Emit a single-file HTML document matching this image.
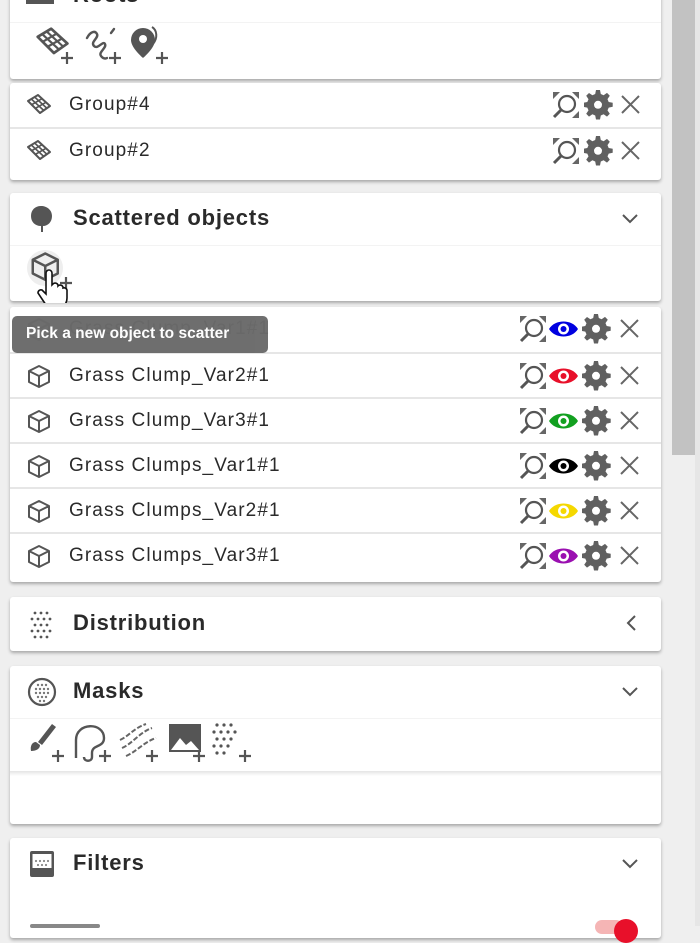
<!DOCTYPE html>
<html><head><meta charset="utf-8">
<style>
*{box-sizing:border-box;margin:0;padding:0}
body{width:700px;height:926px;overflow:hidden;background:#efefef;font-family:"Liberation Sans",sans-serif;color:#222;position:relative}
.card{position:absolute;left:10px;width:651px;background:#fff;border-radius:3px;box-shadow:0 2px 3px rgba(0,0,0,.3)}
.hdr{position:absolute;left:0;right:0;height:52px;font-size:22px;font-weight:bold;color:#2a2a2a;letter-spacing:.8px}
.hdr .t{position:absolute;left:63px;top:12px}
.chev{position:absolute;right:22px;top:20px}
.row{position:absolute;left:0;right:0;height:45px;border-top:2px solid #e6e6e6;font-size:19px;color:#2a2a2a;letter-spacing:1.1px}
.row .n{position:absolute;left:59px;top:11px}
.row .ic{position:absolute;left:16px;top:10px}
.acts{position:absolute;right:20px;top:7px;display:flex;align-items:center}
.sb{position:absolute;left:672px;top:0;width:23px;height:455px;background:#c2c2c2}
.tip{position:absolute;left:12px;top:316px;width:256px;height:37px;background:#6a6a6a;border-radius:5px;color:#fff;font-weight:bold;font-size:15.5px;padding:9px 0 0 14px;opacity:.97}
</style></head><body>
<svg width="0" height="0" style="position:absolute">
<defs>
<g id="zoom"><path d="M1 1h7L1 8z M27 1h-7l7 7z M27 27h-7l7-7z" fill="#666"/><circle cx="15" cy="13" r="8" stroke="#555" stroke-width="2.2" fill="none"/><path d="M9 19l-7 7" stroke="#555" stroke-width="3"/></g>
<g id="gear"><path fill="#606060" d="M12 0h4l.8 4 2.8 1.2 3.4-2.3 2.8 2.8-2.3 3.4L24.7 12l4 .8v4l-4 .8-1.2 2.8 2.3 3.4-2.8 2.8-3.4-2.3-2.8 1.2-.8 4h-4l-.8-4-2.8-1.2-3.4 2.3-2.8-2.8 2.3-3.4L3.3 17.6l-4-.8v-4l4-.8 1.2-2.8-2.3-3.4 2.8-2.8 3.4 2.3L11.2 4z"/><circle cx="14" cy="14.8" r="4" fill="#fff"/></g>
<g id="x"><path d="M2 2l17 17M19 2L2 19" stroke="#666" stroke-width="2"/></g>
<g id="cube"><path d="M13 2l10 5v11l-10 5-10-5V7zM3 7l10 5 10-5M13 12v11" stroke="#555" stroke-width="2" fill="none" stroke-linejoin="round"/></g>
<g id="grid"><path d="M2 8L12 2 24 13 14 20z" stroke="#555" stroke-width="2" fill="none" stroke-linejoin="round"/><path d="M5.3 6L17.3 17M8.6 4L20.6 15M6 11.5L16 5.7M10 15L20 9.3" stroke="#555" stroke-width="1.6"/></g>
<path id="chd" d="M2 2l7 7 7-7" stroke="#555" stroke-width="2" fill="none"/>
<g id="plus"><path d="M6 0v12M0 6h12" stroke="#555" stroke-width="2.2"/></g>
</defs></svg>

<!-- card 1 top -->
<div class="card" style="top:-20px;height:99px">
 <svg style="position:absolute;left:16px;top:17px" width="30" height="8"><rect x="0" y="0" width="28" height="7" fill="#555"/></svg>
 <div style="position:absolute;left:63px;top:2px;font-size:22px;font-weight:bold;letter-spacing:.8px;color:#2a2a2a">Roots</div>
 <div style="position:absolute;left:0;right:0;top:42px;border-top:1px solid #f3f3f3"></div>
 <svg style="position:absolute;left:0;top:20px" width="180" height="80">
  <g transform="translate(25,26) scale(1.35)"><use href="#grid"/></g>
  <use href="#plus" x="51" y="52"/>
  <path d="M77 38c3-6 8-8 10-4s-7 8-3 12 9-6 11-2-7 8-4 12 6 2 6 2M101 33l3-4" stroke="#555" stroke-width="2.4" fill="none" stroke-linecap="round"/>
  <use href="#plus" x="99" y="52"/>
  <path d="M133 28a12 12 0 0 1 12 12c0 8-12 18-12 18s-12-10-12-18a12 12 0 0 1 12-12z" fill="#555"/><circle cx="133" cy="39" r="4" fill="#fff"/><path d="M142 27c5 3 6 11 1 17" stroke="#555" stroke-width="2" fill="none"/>
  <use href="#plus" x="146" y="52"/>
 </svg>
</div>

<!-- card groups -->
<div class="card" style="top:83px;height:97px">
 <div class="row" style="top:0;border-top:none"><svg class="ic" width="28" height="24"><use href="#grid"/></svg><div class="n">Group#4</div>
  <div class="acts" style="right:19px"><svg width="28" height="28"><use href="#zoom"/></svg><svg width="30" height="30" style="margin-left:4px"><use href="#gear"/></svg><svg width="22" height="22" style="margin-left:6px"><use href="#x"/></svg></div></div>
 <div class="row" style="top:44px"><svg class="ic" width="28" height="24"><use href="#grid"/></svg><div class="n">Group#2</div>
  <div class="acts" style="right:19px"><svg width="28" height="28"><use href="#zoom"/></svg><svg width="30" height="30" style="margin-left:4px"><use href="#gear"/></svg><svg width="22" height="22" style="margin-left:6px"><use href="#x"/></svg></div></div>
</div>

<!-- scattered header -->
<div class="card" style="top:193px;height:108px">
 <div class="hdr" style="top:0"><svg style="position:absolute;left:20px;top:12px" width="26" height="28"><path d="M11 1c6 0 11 4 11 10s-4 10-9 10v6h-2v-6C5 21 1 17 1 11S5 1 11 1z" fill="#555"/></svg><div class="t">Scattered objects</div><svg class="chev" width="18" height="12"><use href="#chd"/></svg></div>
 <div style="position:absolute;left:0;right:0;top:52px;border-top:1px solid #f3f3f3"></div>
 <svg style="position:absolute;left:14px;top:54px" width="60" height="56">
  <circle cx="21" cy="21" r="18" fill="#eee"/>
  <g transform="translate(5,4) scale(1.25)"><use href="#cube"/></g>
  <use href="#plus" x="36" y="30"/>
  <path d="M22 44v-18a3 3 0 0 1 6 0v12l1-1a3 3 0 0 1 5 1v1a3 3 0 0 1 5 1v1a3 3 0 0 1 4 2v8c0 6-4 10-10 10h-4c-4 0-7-3-9-6l-6-9a3 3 0 0 1 4-3l4 4z" fill="#fff" stroke="#111" stroke-width="1.6"/>
 </svg>
</div>

<!-- scattered list -->
<div class="card" style="top:307px;height:275px">
 <div class="row" style="top:0;border-top:none"><svg class="ic" width="26" height="25"><use href="#cube"/></svg><div class="n">Grass Clump_Var1#1</div>
  <div class="acts"><svg width="28" height="28"><use href="#zoom"/></svg><svg width="31" height="22" style="margin-left:1px"><path d="M1 11C7 1 24 1 30 11 24 21 7 21 1 11z" fill="#0000e0"/><circle cx="15.5" cy="11" r="5.5" fill="#fff"/><circle cx="15.5" cy="11" r="3" fill="#0000e0"/></svg><svg width="30" height="30" style="margin-left:3px"><use href="#gear"/></svg><svg width="22" height="22" style="margin-left:7px"><use href="#x"/></svg></div></div>
 <div class="row" style="top:45px"><svg class="ic" width="26" height="25"><use href="#cube"/></svg><div class="n">Grass Clump_Var2#1</div>
  <div class="acts"><svg width="28" height="28"><use href="#zoom"/></svg><svg width="31" height="22" style="margin-left:1px"><path d="M1 11C7 1 24 1 30 11 24 21 7 21 1 11z" fill="#e8102a"/><circle cx="15.5" cy="11" r="5.5" fill="#fff"/><circle cx="15.5" cy="11" r="3" fill="#e8102a"/></svg><svg width="30" height="30" style="margin-left:3px"><use href="#gear"/></svg><svg width="22" height="22" style="margin-left:7px"><use href="#x"/></svg></div></div>
 <div class="row" style="top:90px"><svg class="ic" width="26" height="25"><use href="#cube"/></svg><div class="n">Grass Clump_Var3#1</div>
  <div class="acts"><svg width="28" height="28"><use href="#zoom"/></svg><svg width="31" height="22" style="margin-left:1px"><path d="M1 11C7 1 24 1 30 11 24 21 7 21 1 11z" fill="#12a020"/><circle cx="15.5" cy="11" r="5.5" fill="#fff"/><circle cx="15.5" cy="11" r="3" fill="#12a020"/></svg><svg width="30" height="30" style="margin-left:3px"><use href="#gear"/></svg><svg width="22" height="22" style="margin-left:7px"><use href="#x"/></svg></div></div>
 <div class="row" style="top:135px"><svg class="ic" width="26" height="25"><use href="#cube"/></svg><div class="n">Grass Clumps_Var1#1</div>
  <div class="acts"><svg width="28" height="28"><use href="#zoom"/></svg><svg width="31" height="22" style="margin-left:1px"><path d="M1 11C7 1 24 1 30 11 24 21 7 21 1 11z" fill="#000"/><circle cx="15.5" cy="11" r="5.5" fill="#fff"/><circle cx="15.5" cy="11" r="3" fill="#000"/></svg><svg width="30" height="30" style="margin-left:3px"><use href="#gear"/></svg><svg width="22" height="22" style="margin-left:7px"><use href="#x"/></svg></div></div>
 <div class="row" style="top:180px"><svg class="ic" width="26" height="25"><use href="#cube"/></svg><div class="n">Grass Clumps_Var2#1</div>
  <div class="acts"><svg width="28" height="28"><use href="#zoom"/></svg><svg width="31" height="22" style="margin-left:1px"><path d="M1 11C7 1 24 1 30 11 24 21 7 21 1 11z" fill="#f5d800"/><circle cx="15.5" cy="11" r="5.5" fill="#fff"/><circle cx="15.5" cy="11" r="3" fill="#f5d800"/></svg><svg width="30" height="30" style="margin-left:3px"><use href="#gear"/></svg><svg width="22" height="22" style="margin-left:7px"><use href="#x"/></svg></div></div>
 <div class="row" style="top:225px"><svg class="ic" width="26" height="25"><use href="#cube"/></svg><div class="n">Grass Clumps_Var3#1</div>
  <div class="acts"><svg width="28" height="28"><use href="#zoom"/></svg><svg width="31" height="22" style="margin-left:1px"><path d="M1 11C7 1 24 1 30 11 24 21 7 21 1 11z" fill="#9a10b0"/><circle cx="15.5" cy="11" r="5.5" fill="#fff"/><circle cx="15.5" cy="11" r="3" fill="#9a10b0"/></svg><svg width="30" height="30" style="margin-left:3px"><use href="#gear"/></svg><svg width="22" height="22" style="margin-left:7px"><use href="#x"/></svg></div></div>
</div>

<div class="tip">Pick a new object to scatter</div>

<!-- distribution -->
<div class="card" style="top:597px;height:54px">
 <div class="hdr" style="top:1px"><svg style="position:absolute;left:16px;top:11px" width="30" height="32"><g fill="#555"><circle cx="9" cy="4" r="1.4"/><circle cx="15" cy="4" r="1.4"/><circle cx="21" cy="4" r="1.4"/><circle cx="6" cy="10" r="1.4"/><circle cx="12" cy="10" r="1.4"/><circle cx="18" cy="10" r="1.4"/><circle cx="24" cy="10" r="1.4"/><circle cx="9" cy="16" r="1.4"/><circle cx="15" cy="16" r="1.4"/><circle cx="21" cy="16" r="1.4"/><circle cx="6" cy="22" r="1.4"/><circle cx="12" cy="22" r="1.4"/><circle cx="18" cy="22" r="1.4"/><circle cx="24" cy="22" r="1.4"/><circle cx="9" cy="28" r="1.4"/><circle cx="15" cy="28" r="1.4"/><circle cx="21" cy="28" r="1.4"/></g></svg><div class="t">Distribution</div><svg class="chev" style="right:24px;top:16px" width="12" height="18"><path d="M10 2L3 9l7 7" stroke="#555" stroke-width="2" fill="none"/></svg></div>
</div>

<!-- masks -->
<div class="card" style="top:666px;height:158px">
 <div class="hdr" style="top:0"><svg style="position:absolute;left:16px;top:10px" width="32" height="32"><circle cx="16" cy="16" r="13" fill="none" stroke="#555" stroke-width="2.2"/><g fill="#777"><circle cx="12" cy="9" r="1.2"/><circle cx="16" cy="9" r="1.2"/><circle cx="20" cy="9" r="1.2"/><circle cx="10" cy="13" r="1.2"/><circle cx="14" cy="13" r="1.2"/><circle cx="18" cy="13" r="1.2"/><circle cx="22" cy="13" r="1.2"/><circle cx="10" cy="17" r="1.2"/><circle cx="14" cy="17" r="1.2"/><circle cx="18" cy="17" r="1.2"/><circle cx="22" cy="17" r="1.2"/><circle cx="12" cy="21" r="1.2"/><circle cx="16" cy="21" r="1.2"/><circle cx="20" cy="21" r="1.2"/><circle cx="14" cy="25" r="1.2"/><circle cx="18" cy="25" r="1.2"/></g></svg><div class="t">Masks</div><svg class="chev" width="18" height="12"><use href="#chd"/></svg></div>
 <div style="position:absolute;left:0;right:0;top:52px;border-top:1px solid #f3f3f3"></div>
 <svg style="position:absolute;left:0;top:52px" width="260" height="50">
  <path d="M42 6l4 3-14 18-4-3z" fill="#555"/><path d="M26 24c-4 0-6 4-5 9 5 0 9-2 9-6z" fill="#555"/><use href="#plus" x="42" y="32"/>
  <path d="M66 40V22c0-18 28-18 28-2 0 10-12 6-12 15v4c0 5-8 5-8 0" stroke="#555" stroke-width="2.4" fill="none"/><use href="#plus" x="89" y="32"/>
  <path d="M112 30c10-4 18-16 30-20M110 22c9-4 14-12 26-16M116 38c10-4 18-14 30-18" stroke="#666" stroke-width="2" stroke-dasharray="5 2" fill="none"/><use href="#plus" x="136" y="32"/>
  <path d="M159 6h32v28h-32z" fill="#555"/><path d="M161 32l9-12 6 7 5-4 8 9z" fill="#fff"/><use href="#plus" x="183" y="32"/>
  <g fill="#555"><circle cx="207" cy="7" r="1.6"/><circle cx="214" cy="7" r="1.6"/><circle cx="221" cy="7" r="1.6"/><circle cx="204" cy="14" r="1.6"/><circle cx="211" cy="14" r="1.6"/><circle cx="218" cy="14" r="1.6"/><circle cx="225" cy="14" r="1.6"/><circle cx="207" cy="21" r="1.6"/><circle cx="214" cy="21" r="1.6"/><circle cx="221" cy="21" r="1.6"/><circle cx="204" cy="28" r="1.6"/><circle cx="211" cy="28" r="1.6"/><circle cx="218" cy="28" r="1.6"/><circle cx="207" cy="35" r="1.6"/><circle cx="214" cy="35" r="1.6"/></g><use href="#plus" x="229" y="32"/>
 </svg>
 <div style="position:absolute;left:0;right:0;top:105px;height:5px;background:linear-gradient(#e4e4e4,#fff)"></div>
</div>

<!-- filters -->
<div class="card" style="top:838px;height:100px">
 <div class="hdr" style="top:0"><svg style="position:absolute;left:18px;top:11px" width="30" height="30"><rect x="2" y="2" width="24" height="26" rx="2" fill="#555"/><rect x="4.5" y="5" width="19" height="14" fill="#fff"/><g fill="#888"><circle cx="8" cy="12" r="1.1"/><circle cx="12" cy="12" r="1.1"/><circle cx="16" cy="12" r="1.1"/><circle cx="20" cy="12" r="1.1"/><circle cx="10" cy="16" r="1.1"/><circle cx="14" cy="16" r="1.1"/><circle cx="18" cy="16" r="1.1"/></g></svg><div class="t">Filters</div><svg class="chev" width="18" height="12"><use href="#chd"/></svg></div>
 <div style="position:absolute;left:585px;top:82px;width:28px;height:14px;border-radius:7px;background:#f5b5b5"></div>
 <div style="position:absolute;left:604px;top:81px;width:24px;height:24px;border-radius:50%;background:#e8102a"></div>
 <div style="position:absolute;left:20px;top:86px;width:70px;height:4px;background:#888;border-radius:2px"></div>
</div>

<div class="sb"></div>
<div style="position:absolute;left:695px;top:0;width:5px;height:926px;background:#e6e6e6"></div>
</body></html>
